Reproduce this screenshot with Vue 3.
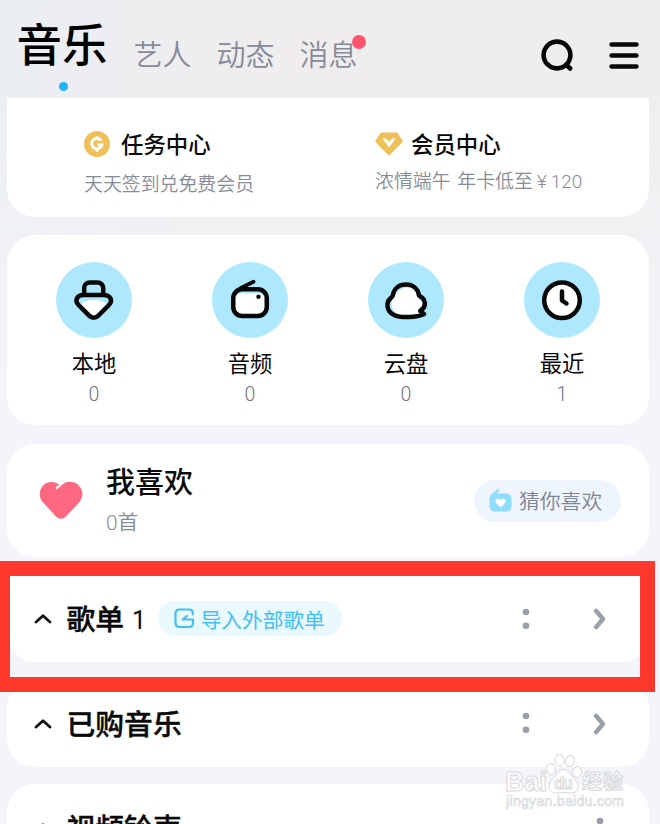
<template>
  <div class="page">
    <!-- Top tabs -->
    <header class="header">
      <nav class="tabs">
        <button
          v-for="tab in tabs"
          :key="tab.name"
          :class="['tab', { active: selectedTab === tab.name }]"
          @click="selectedTab = tab.name"
        >
          {{ tab.name }}
          <span v-if="tab.unread" class="unread"></span>
        </button>
      </nav>
      <svg class="search" width="36" height="36" viewBox="0 0 36 36">
        <circle cx="17" cy="17" r="13.4" />
        <path d="M27.5 28l2.7 2.5" />
      </svg>
      <svg class="menu" width="30" height="30" viewBox="0 0 30 30">
        <path d="M2.6 3.5h24.8M2.6 14.5h24.8M2.6 25.5h24.8" />
      </svg>
    </header>

    <!-- Task / member center -->
    <section class="card centers">
      <div class="center task">
        <h3>
          <svg width="26" height="26" viewBox="0 0 26 26">
            <circle cx="13" cy="13" r="13" fill="#efbf59" />
            <path d="M17.3 9.8A5.2 5.2 0 1 0 18 14H13.5M13 5.2v3M13 17.8v3" fill="none" stroke="#fff" stroke-width="2.8" />
          </svg>
          任务中心
        </h3>
        <p>天天签到兑免费会员</p>
      </div>
      <div class="center member">
        <h3>
          <svg width="28" height="24" viewBox="0 0 28 24">
            <path d="M6.2 1.5h15.6l5 7.8L14 22.2 1.2 9.3z" fill="#efbf59" stroke="#efbf59" stroke-width="2" stroke-linejoin="round" />
            <path d="M8 6.8l5.4 7.7h1.2L20 6.8l-3.2.2-2.8 3.5L11.2 7z" fill="#fff" stroke="#fff" stroke-width=".6" />
          </svg>
          会员中心
        </h3>
        <p>浓情端午 年卡低至<span class="price">¥</span><span class="num">120</span></p>
      </div>
    </section>

    <!-- Shortcuts -->
    <section class="card shortcuts">
      <div v-for="item in shortcuts" :key="item.label" class="shortcut">
        <div class="round">
          <svg v-if="item.icon === 'local'" width="42" height="42" viewBox="0 0 42 42">
            <path d="M11.2 15.5V9a5.5 5.5 0 0 1 5.5-5.5h8A5.5 5.5 0 0 1 30.2 9v6.5" />
            <path class="fill" d="M8.5 25.5c1-6 23-6 24.5 0L23 36q-2 1.5-4 0z" />
            <path d="M10.5 16h20c7.5 0 9.5 6 5.5 10L25.5 36.5q-4.8 4.5-9.5 0L5.5 26c-4-4-2-10 5-10z" />
          </svg>
          <svg v-else-if="item.icon === 'radio'" width="42" height="42" viewBox="0 0 42 42">
            <path class="fill" d="M6.5 20q1-5.5 6-5.5H30q5.5 0 5.5 5v10q0 6-6 6H12.5q-6 0-6-6z" />
            <rect x="4.2" y="10.2" width="33.6" height="26.8" rx="9" />
            <path class="thin" d="M11 9.5L24.5 2.8" />
            <circle class="dot" cx="29.5" cy="17.8" r="2.2" />
          </svg>
          <svg v-else-if="item.icon === 'cloud'" width="42" height="42" viewBox="0 0 42 42">
            <path class="fill" d="M6.5 25C8 17 13 9.5 21 8.5c7 0 11 4 12 10l5 6-4 7 2 4.5c-8 3-29 3-29.5-11z" />
            <path d="M7.8 16.500C8.800 9.500 14 5.600 21 5.600S33 9.500 34 16.500c5.500 3 7.500 8 4.500 12.500l-3.300 3 3.800 3c-7 3.800-24 4-30 1-7.500-3.500-8.500-12.500-3.200-17q1.500-1 2-2.500z" />
          </svg>
          <svg v-else width="42" height="42" viewBox="0 0 42 42">
            <circle class="clock" cx="21" cy="21.2" r="17.8" />
            <path d="M21 12.5v9l4.5 3" />
          </svg>
        </div>
        <span class="label">{{ item.label }}</span>
        <span class="count">{{ item.count }}</span>
      </div>
    </section>

    <!-- Favorites -->
    <section class="card favorite">
      <svg class="heart" width="44" height="40" viewBox="0 0 44 40">
        <path d="M17.5 8.3l-1-1.500c1.500-1.800 2.300-2 3.700-3C15.500-.4 7.500 0 3.600 4.900c-4.300 5.700-3.600 12.500 1.200 17.300L17 35.500q5 4.500 10 0l12.400-13.300c4.900-4.900 5.500-11.800.8-17.300C35.500-.4 27-.4 22.600 4.200c-1.500 1.600-2.700 2.700-5.100 4.100z" fill="#ff6880" />
      </svg>
      <div class="favorite-text">
        <h2>我喜欢</h2>
        <p><span class="num">0</span>首</p>
      </div>
      <button class="guess">
        <svg width="23" height="23" viewBox="0 0 23 23">
          <path d="M3.5 6L9 1.5" stroke="#8fddfb" stroke-width="2.8" stroke-linecap="round" />
          <rect x=".5" y="4.5" width="22" height="18" rx="5" fill="#8fddfb" />
          <path d="M11.5 18.5l-4.5-4.5c-2.2-3 1.8-6 4.5-3.2 2.7-2.8 6.7.2 4.5 3.2z" fill="#fff" />
        </svg>
        猜你喜欢
      </button>
    </section>

    <!-- Collapsible lists -->
    <section v-for="list in lists" :key="list.title" :class="['card', 'list', { playlists: list.importable }]">
      <svg class="fold" width="18" height="11" viewBox="0 0 18 11">
        <path d="M2 9l7-6.3L16 9" />
      </svg>
      <h2>{{ list.title }}</h2>
      <span v-if="list.count" class="list-count">{{ list.count }}</span>
      <button v-if="list.importable" class="import">
        <svg width="21" height="21" viewBox="0 0 21 21">
          <path d="M18.8 6.5V5q0-3.5-3.5-3.5H5.5q-4 0-4 4v9q0 4.5 4 4.500H15q4 0 4-4v-3.500H8.500L13 8" />
        </svg>
        导入外部歌单
      </button>
      <svg class="more" width="8" height="22" viewBox="0 0 8 22">
        <circle cx="4" cy="4" r="3.3" />
        <circle cx="4" cy="17.7" r="3.3" />
      </svg>
      <svg v-if="list.enter" class="enter" width="14" height="24" viewBox="0 0 14 24">
        <path d="M4 3.8l7 8.2-7 8.2" />
      </svg>
    </section>

    <div class="marker"></div>

    <svg class="watermark" width="126" height="62" viewBox="0 0 126 62">
      <g class="paw">
        <ellipse cx="49" cy="18" rx="4.5" ry="5.8" transform="rotate(-15 49 18)" />
        <ellipse cx="57.5" cy="9" rx="4.5" ry="5.8" />
        <ellipse cx="68" cy="10" rx="4.5" ry="5.8" transform="rotate(15 68 10)" />
        <ellipse cx="75" cy="21" rx="4.3" ry="5.6" transform="rotate(15 75 21)" />
        <path d="M61 18.5c6 0 7 6 12 10 6 6 3 14-4 13.5-5-.5-10-.5-15 0-7 .5-9.5-8-4-13.5 5-4 6-10 11-10z" />
      </g>
      <text class="brand" x="3" y="40" textLength="42" lengthAdjust="spacingAndGlyphs">Bai</text>
      <text class="du" x="52" y="38" textLength="19">du</text>
      <text class="cn" x="80" y="38" textLength="41">经验</text>
      <text class="site" x="4" y="55" textLength="118">jingyan.baidu.com</text>
    </svg>
  </div>
</template>

<script setup>
import { ref } from "vue";

const selectedTab = ref("音乐");

const tabs = [
  { name: "音乐" },
  { name: "艺人" },
  { name: "动态" },
  { name: "消息", unread: true },
];

const shortcuts = [
  { label: "本地", count: 0, icon: "local" },
  { label: "音频", count: 0, icon: "radio" },
  { label: "云盘", count: 0, icon: "cloud" },
  { label: "最近", count: 1, icon: "recent" },
];

const lists = [
  { title: "歌单", count: 1, importable: true, enter: true },
  { title: "已购音乐", enter: true },
  { title: "视频铃声" },
];
</script>

<style>
body {
  margin: 0;
  overflow: hidden;
}
</style>

<style scoped>
.page {
  position: relative;
  width: 660px;
  height: 824px;
  overflow: hidden;
  background: linear-gradient(180deg, rgba(244, 245, 250, 0) 90px, #f4f5fa 420px),
    linear-gradient(90deg, #ebeef3, #efedee 35%, #efedef);
  font-family: "Noto Sans CJK SC", sans-serif;
  color: #0a0a0a;
}
h2, h3, p {
  margin: 0;
}
button {
  border: none;
  padding: 0;
  background: none;
  font-family: inherit;
  cursor: pointer;
}
svg {
  flex: none;
  overflow: visible;
}
.header {
  display: flex;
  height: 98px;
  padding: 0 21px 0 16.5px;
}
.tabs {
  display: flex;
  flex: 1;
  gap: 25px;
}
.tab {
  position: relative;
  height: 40px;
  margin-top: 33px;
  line-height: 40px;
  font-size: 29px;
  font-weight: 350;
  color: #858b99;
}
.tab.active {
  height: 50px;
  margin-top: 17px;
  margin-right: 1px;
  line-height: 50px;
  font-size: 45.5px;
  font-weight: 500;
  color: #000;
}
.tab.active::after {
  content: "";
  position: absolute;
  left: 42px;
  bottom: -24px;
  width: 9px;
  height: 9px;
  border-radius: 50%;
  background: #20b4f8;
}
.unread {
  position: absolute;
  top: 2px;
  right: -8px;
  width: 14px;
  height: 14px;
  border-radius: 50%;
  background: #ff5470;
}
.search {
  margin: 38px 33px 0 0;
}
.menu {
  margin-top: 41px;
}
.search, .menu {
  fill: none;
  stroke: #080808;
  stroke-width: 4.6;
  stroke-linecap: round;
}
.card {
  box-sizing: border-box;
  margin: 0 11px 18px 7px;
  border-radius: 28px;
  background: #fff;
}
.centers {
  display: flex;
  height: 119px;
  border-radius: 0 0 28px 28px;
}
.center {
  padding-top: 30px;
}
.task {
  width: 292px;
  box-sizing: border-box;
  padding-left: 77px;
}
.member {
  padding-left: 76px;
}
.center h3 {
  display: flex;
  align-items: center;
  gap: 11px;
  height: 30px;
  line-height: 30px;
  font-size: 22.4px;
  font-weight: 500;
}
.center h3 svg {
  margin-top: 2px;
}
.member h3 {
  gap: 8px;
}
.center p {
  height: 26px;
  margin-top: 12px;
  line-height: 26px;
  font-size: 18.9px;
  font-weight: 350;
  color: #858b99;
  white-space: nowrap;
}
.member p {
  margin-top: 9px;
  word-spacing: 2.5px;
}
.price {
  display: inline-block;
  width: 18px;
  text-align: center;
  font-family: Roboto, sans-serif;
}
.num {
  font-family: Roboto, sans-serif;
}
.shortcuts {
  display: grid;
  grid-template-columns: repeat(4, 156px);
  height: 190px;
  padding: 27px 0 0 9px;
  margin-bottom: 19px;
}
.shortcut {
  display: flex;
  flex-direction: column;
  align-items: center;
}
.round {
  display: flex;
  align-items: center;
  justify-content: center;
  width: 76px;
  height: 76px;
  border-radius: 50%;
  background: #ade8ff;
}
.round svg {
  fill: none;
  stroke: #080808;
  stroke-width: 4.5;
  stroke-linecap: round;
  stroke-linejoin: round;
}
.round .fill {
  fill: #fff;
  stroke: none;
}
.round .thin {
  stroke-width: 3.8;
}
.round .clock {
  fill: #fff;
}
.round .dot {
  fill: #080808;
  stroke: none;
}
.label {
  height: 30px;
  margin-top: 9px;
  line-height: 30px;
  font-size: 22.3px;
}
.count {
  margin-top: 6px;
  line-height: 24px;
  font-family: Roboto, sans-serif;
  font-size: 19.5px;
  font-weight: 300;
  color: #6b727f;
}
.favorite {
  display: flex;
  align-items: center;
  height: 113px;
  padding: 0 28px 0 32px;
}
.heart {
  margin-right: 23px;
}
.favorite-text {
  flex: 1;
  margin-top: -4px;
}
.favorite-text h2 {
  line-height: 38px;
  font-size: 29px;
  font-weight: 500;
}
.favorite-text p {
  margin-top: 8px;
  line-height: 28px;
  font-size: 20.8px;
  font-weight: 350;
  color: #858b99;
}
.guess {
  display: flex;
  align-items: center;
  gap: 7px;
  width: 147px;
  height: 42px;
  padding-left: 15px;
  padding-bottom: 1px;
  border-radius: 21px;
  background: #eff5fe;
  font-size: 20.8px;
  font-weight: 350;
  color: #7d8492;
  white-space: nowrap;
}
.list {
  display: flex;
  align-items: center;
  height: 87px;
  padding: 0 45px 0 27px;
  margin-bottom: 17.5px;
}
.playlists {
  border-radius: 0 0 28px 28px;
}
.list h2 {
  margin: -1px 0 0 14.5px;
  line-height: 38px;
  font-size: 28.8px;
  font-weight: 500;
  -webkit-text-stroke: .4px #0a0a0a;
}
.fold, .enter {
  fill: none;
  stroke: #111;
  stroke-width: 2.8;
  stroke-linecap: round;
  stroke-linejoin: round;
}
.list-count {
  margin: 3px 0 0 8px;
  font-family: Roboto, sans-serif;
  font-size: 25px;
}
.import {
  display: flex;
  align-items: center;
  gap: 6px;
  width: 184px;
  height: 35px;
  margin-left: 11.5px;
  padding-left: 16px;
  border-radius: 18px;
  background: #e9f9ff;
  font-size: 20.7px;
  color: #45bdf5;
  white-space: nowrap;
}
.import svg {
  fill: none;
  stroke: #45bdf5;
  stroke-width: 2.2;
  stroke-linecap: round;
  stroke-linejoin: round;
}
.more {
  margin-left: auto;
  fill: #9aa0aa;
}
.enter {
  margin: 1px -2px 0 62px;
  stroke: #9aa0aa;
  stroke-width: 4.4;
}
/* Highlight frame over the playlist row */
.marker {
  position: absolute;
  top: 561px;
  left: -5px;
  width: 630px;
  height: 101px;
  border: 15px solid #ff382e;
}
.watermark {
  position: absolute;
  top: 751px;
  left: 502px;
  fill: #fff;
  stroke: #d6d7da;
  stroke-width: 1;
}
.watermark text {
  font-family: "Liberation Sans", "Noto Sans CJK SC", sans-serif;
  font-weight: bold;
}
.brand {
  font-size: 27px;
}
.du {
  font-size: 17px;
}
.watermark .cn {
  font-family: "Noto Sans CJK SC", sans-serif;
  font-size: 20px;
}
.watermark .site {
  font-size: 14px;
  font-weight: normal;
  stroke-width: .7;
}
</style>
